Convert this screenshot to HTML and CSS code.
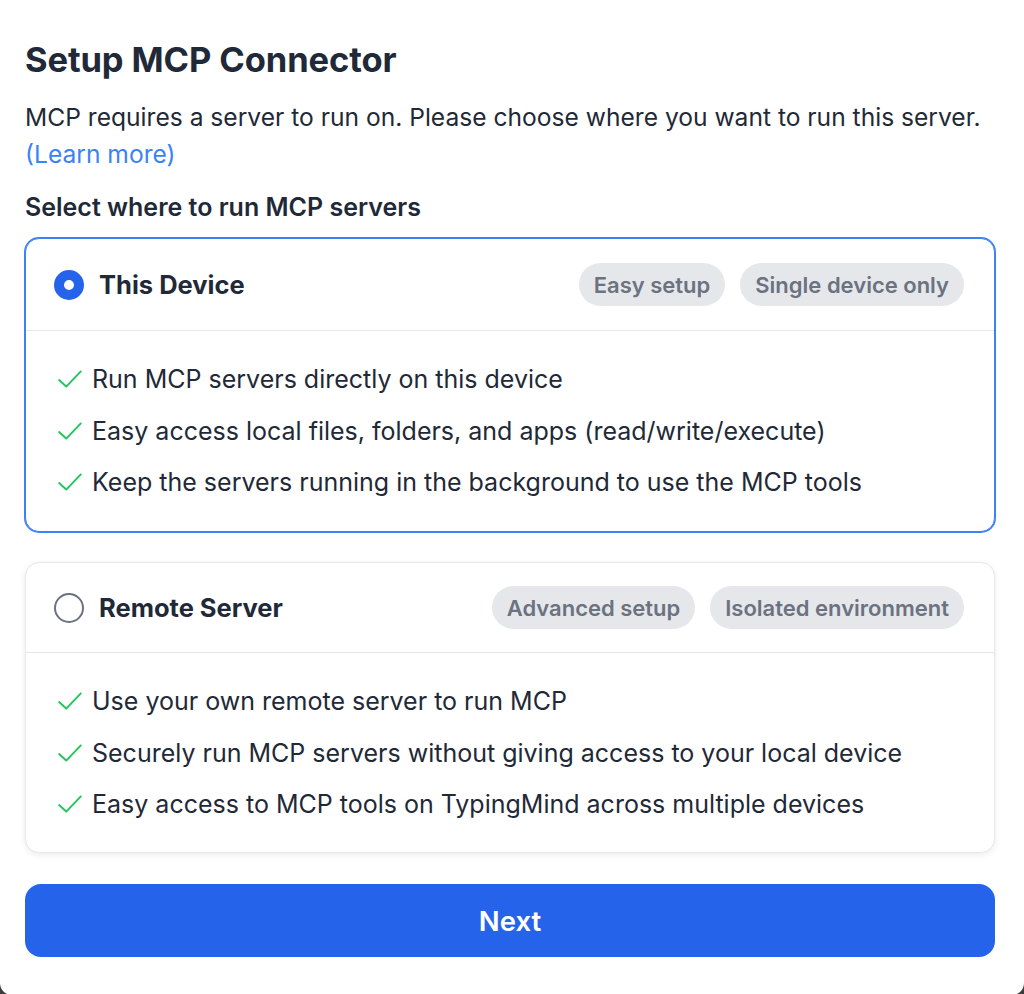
FILE: index.html
```html
<!DOCTYPE html>
<html lang="en">
<head>
<meta charset="utf-8">
<title>Setup MCP Connector</title>
<link rel="stylesheet" href="styles.css">
</head>
<body>
<div class="modal">
  <h1 class="title">Setup MCP Connector</h1>
  <p class="intro">MCP requires a server to run on. Please choose where you want to run this server.<br><a class="link" href="#">(Learn more)</a></p>
  <h2 class="subtitle">Select where to run MCP servers</h2>

  <div class="option selected">
    <div class="option-head">
      <span class="radio checked"></span>
      <span class="option-name">This Device</span>
      <span class="badges">
        <span class="badge">Easy setup</span>
        <span class="badge">Single device only</span>
      </span>
    </div>
    <ul class="features">
      <li><svg class="check" viewBox="0 0 24 24"><path d="M2 13l6.5 6L22 5"/></svg>Run MCP servers directly on this device</li>
      <li><svg class="check" viewBox="0 0 24 24"><path d="M2 13l6.5 6L22 5"/></svg>Easy access local files, folders, and apps (read/write/execute)</li>
      <li><svg class="check" viewBox="0 0 24 24"><path d="M2 13l6.5 6L22 5"/></svg>Keep the servers running in the background to use the MCP tools</li>
    </ul>
  </div>

  <div class="option">
    <div class="option-head">
      <span class="radio"></span>
      <span class="option-name">Remote Server</span>
      <span class="badges">
        <span class="badge">Advanced setup</span>
        <span class="badge">Isolated environment</span>
      </span>
    </div>
    <ul class="features">
      <li><svg class="check" viewBox="0 0 24 24"><path d="M2 13l6.5 6L22 5"/></svg>Use your own remote server to run MCP</li>
      <li><svg class="check" viewBox="0 0 24 24"><path d="M2 13l6.5 6L22 5"/></svg>Securely run MCP servers without giving access to your local device</li>
      <li><svg class="check" viewBox="0 0 24 24"><path d="M2 13l6.5 6L22 5"/></svg>Easy access to MCP tools on TypingMind across multiple devices</li>
    </ul>
  </div>

  <button class="next">Next</button>
</div>
</body>
</html>
```

FILE: styles.css
```css
* { box-sizing: border-box; }

html, body {
  margin: 0;
  padding: 0;
  height: 100%;
}

body {
  background: #3c3c3c;
  font-family: Inter, "Noto Sans", "Liberation Sans", sans-serif;
  color: #1f2937;
}

.modal {
  background: #ffffff;
  min-height: 994px;
  padding: 38px 29px 38px 25px;
  border-radius: 0 0 12px 12px;
}

.title {
  margin: 0;
  font-size: 34.5px;
  line-height: 44px;
  font-weight: 700;
  letter-spacing: -0.1px;
  color: #1f2937;
}

.intro {
  margin: 17px 0 0;
  font-size: 24.6px;
  line-height: 37px;
  color: #1f2937;
  white-space: nowrap;
}

.link {
  color: #3b82f6;
  text-decoration: none;
}

.subtitle {
  margin: 16px 0 0;
  font-size: 25px;
  line-height: 36px;
  font-weight: 600;
  color: #1f2937;
}

.option {
  margin-top: 13px;
  border: 1px solid #e5e7eb;
  border-radius: 14px;
  background: #fff;
  box-shadow: 0 2px 6px rgba(0, 0, 0, 0.08);
}

.option + .option {
  margin-top: 30px;
}

.option.selected {
  border-color: #3b82f6;
  box-shadow: 0 0 0 1px #3b82f6;
}

.option-head {
  display: flex;
  align-items: center;
  padding: 23px 30px 23px 28px;
  border-bottom: 1px solid #e5e7eb;
}

.option.selected .option-head {
  padding-top: 24px;
  padding-bottom: 24px;
}

.option.selected .features {
  padding-bottom: 31px;
}

.radio {
  width: 30px;
  height: 30px;
  border-radius: 50%;
  border: 2px solid #6b7280;
  flex: none;
}

.radio.checked {
  border: 10px solid #2563eb;
  background: #fff;
}

.option-name {
  margin-left: 15px;
  font-size: 25.5px;
  font-weight: 700;
  color: #1f2937;
}

.badges {
  margin-left: auto;
  display: flex;
  gap: 15px;
}

.badge {
  display: inline-flex;
  align-items: center;
  height: 43px;
  padding: 0 15px;
  border-radius: 999px;
  background: #e5e7eb;
  color: #6b7280;
  font-size: 22px;
  font-weight: 600;
}

.features {
  list-style: none;
  margin: 0;
  padding: 30px 30px 30px 31px;
  display: flex;
  flex-direction: column;
  gap: 15.5px;
}

.features li {
  display: flex;
  align-items: center;
  font-size: 25px;
  line-height: 36px;
  color: #1f2937;
}

.check {
  width: 26px;
  height: 26px;
  margin-right: 9px;
  flex: none;
  fill: none;
  stroke: #22c55e;
  stroke-width: 1.8;
  stroke-linecap: round;
  stroke-linejoin: round;
}

.next {
  display: block;
  width: 100%;
  margin-top: 31px;
  height: 73px;
  border: none;
  border-radius: 16px;
  background: #2563eb;
  color: #fff;
  font-family: Inter, "Noto Sans", "Liberation Sans", sans-serif;
  font-size: 27.5px;
  font-weight: 600;
  cursor: pointer;
}
```
